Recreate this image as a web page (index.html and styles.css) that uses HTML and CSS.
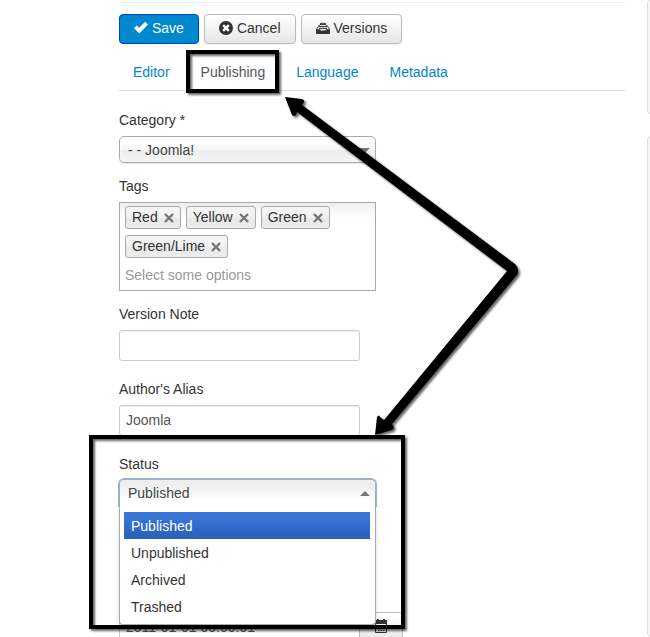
FILE: index.html
```html
<!DOCTYPE html>
<html lang="en">
<head>
    <meta charset="UTF-8">
    <meta name="viewport" content="width=device-width, initial-scale=1.0">
    <title>Edit Article</title>
    <link rel="stylesheet" href="styles.css">
</head>
<body>
    <div class="page">
        <main class="content">
            <form class="edit-form">
                <!-- Toolbar -->
                <div class="toolbar">
                    <button type="button" class="btn btn-primary">
                        <svg class="icon" viewBox="0 0 14 14"><path d="M0 7.2 2.6 4.4 5.2 6.8 11.2.8 14 3.6 5.3 12.6z"/></svg>
                        Save
                    </button>
                    <button type="button" class="btn">
                        <svg class="icon" viewBox="0 0 14 14"><circle cx="7" cy="7" r="7"/><path class="cross" d="M4.2 4.2l5.6 5.6M9.8 4.2l-5.6 5.6"/></svg>
                        Cancel
                    </button>
                    <button type="button" class="btn">
                        <svg class="icon" viewBox="0 0 14 14"><path d="M0 8.2h4l.8 1.4h4.4l.8-1.4h4V12c0 .7-.4 1-1 1H1c-.6 0-1-.3-1-1z"/><path class="line" d="M.5 8 2.4 5.6h9.2L13.5 8M2.6 5.2 4 3.6h6l1.4 1.6M4 3 5 2.3h4l1 .7M3 7.4h8"/></svg>
                        Versions
                    </button>
                </div>

                <!-- Tabs -->
                <nav class="tabs">
                    <a href="#editor">Editor</a>
                    <a href="#publishing" class="active">Publishing</a>
                    <a href="#language">Language</a>
                    <a href="#metadata">Metadata</a>
                </nav>

                <!-- Publishing -->
                <div class="field">
                    <label for="category">Category *</label>
                    <div class="select">
                        <select id="category">
                            <option>- - Joomla!</option>
                        </select>
                    </div>
                </div>

                <div class="field">
                    <label for="tags">Tags</label>
                    <div class="tags">
                        <span class="tag">Red <button type="button" aria-label="Remove Red"><svg viewBox="0 0 10 10"><path d="M1 1l8 8M9 1L1 9"/></svg></button></span>
                        <span class="tag">Yellow <button type="button" aria-label="Remove Yellow"><svg viewBox="0 0 10 10"><path d="M1 1l8 8M9 1L1 9"/></svg></button></span>
                        <span class="tag">Green <button type="button" aria-label="Remove Green"><svg viewBox="0 0 10 10"><path d="M1 1l8 8M9 1L1 9"/></svg></button></span>
                        <span class="tag">Green/Lime <button type="button" aria-label="Remove Green/Lime"><svg viewBox="0 0 10 10"><path d="M1 1l8 8M9 1L1 9"/></svg></button></span>
                        <input type="text" id="tags" placeholder="Select some options">
                    </div>
                </div>

                <div class="field field-text">
                    <label for="version-note">Version Note</label>
                    <input type="text" id="version-note" class="text">
                </div>

                <div class="field field-text">
                    <label for="alias">Author's Alias</label>
                    <input type="text" id="alias" class="text" value="Joomla">
                </div>

                <div class="field field-status">
                    <label for="status">Status</label>
                    <div class="select open">
                        <select id="status">
                            <option>Published</option>
                        </select>
                        <ul class="menu" role="listbox" aria-label="Status">
                            <li class="selected" role="option" aria-selected="true">Published</li>
                            <li role="option">Unpublished</li>
                            <li role="option">Archived</li>
                            <li role="option">Trashed</li>
                        </ul>
                    </div>
                </div>

                <div class="date">
                    <input type="text" class="text" aria-label="Start Publishing" value="2011-01-01 00:00:01">
                    <button type="button" class="btn" aria-label="Calendar">
                        <svg class="icon" viewBox="0 0 14 14"><path d="M1 1h2V0h2v1h4V0h2v1h2v4H1z"/><path class="line" d="M1.5 5v8.5h11V5M4 7.5h1.5m1 0H8m1 0h1.5M4 9.5h1.5m1 0H8m1 0h1.5M4 11.5h1.5m1 0H8m1 0h1.5"/></svg>
                    </button>
                </div>
            </form>
        </main>

        <aside class="sidebar">
            <div class="well"></div>
            <div class="well well-main"></div>
        </aside>
    </div>

    <!-- Callout frames and arrows -->
    <svg class="callouts" width="650" height="637" viewBox="0 0 650 637" aria-hidden="true">
        <rect x="188" y="52" width="89" height="39"/>
        <rect x="91" y="437" width="312" height="190"/>
        <path d="M285 97l17 2q3 1 2 3l-2 3 213 159q5 5 2 11L392 424l2 3q0 2-2 3l-17 5 2-18q2-3 3 0l4 3 123-149L297 112l-1 3q-2 2-4 0z"/>
    </svg>
</body>
</html>
```
FILE: styles.css
```css
* {
    box-sizing: border-box;
}

body {
    margin: 0;
    background: #fff;
    color: #333;
    font-family: Arial, "Liberation Sans", sans-serif;
    font-size: 14px;
    line-height: 18px;
}

input, select, button {
    margin: 0;
    font: inherit;
    color: inherit;
}

.page {
    display: flex;
    gap: 22px;
    height: 100vh;
    padding-left: 119px;
    overflow: hidden;
}

.content {
    flex: 1;
    padding-top: 2px;
}

.edit-form {
    border-top: 1px solid #eee;
    padding-top: 11px;
}

/* Toolbar */
.toolbar {
    display: flex;
    gap: 5px;
    margin-bottom: 10px;
}

.btn {
    display: flex;
    align-items: center;
    gap: 4px;
    height: 30px;
    padding: 0 14px 2px;
    border: 1px solid #bbb;
    border-radius: 4px;
    background: linear-gradient(#fff, #e6e6e6);
    box-shadow: inset 0 1px 0 #fff, 0 1px 2px rgba(0, 0, 0, 0.05);
    cursor: pointer;
}

.btn-primary {
    border-color: #04c;
    background: #08c;
    color: #fff;
    box-shadow: none;
}

.icon {
    width: 14px;
    height: 14px;
    fill: currentColor;
}

.icon .cross {
    stroke: #fff;
    stroke-width: 2.4;
}

.icon .line {
    fill: none;
    stroke: currentColor;
}

/* Tabs */
.tabs {
    display: flex;
    gap: 3px;
    margin-bottom: 20px;
    border-bottom: 1px solid #ddd;
}

.tabs a {
    padding: 9px 14px;
    color: #08c;
    text-decoration: none;
}

.tabs .active {
    color: #555;
}

/* Fields */
.field {
    margin-bottom: 14px;
}

.field-text {
    margin-bottom: 19px;
}

.field-status {
    margin-bottom: 106px;
}

label {
    display: block;
    margin-bottom: 7px;
}

.field-status label {
    margin-bottom: 6px;
}

.text {
    display: block;
    width: 241px;
    height: 31px;
    padding: 0 6px 2px;
    border: 1px solid #ccc;
    border-radius: 3px;
    background: #fff;
    color: #555;
    box-shadow: inset 0 1px 1px rgba(0, 0, 0, 0.08);
}

.select {
    position: relative;
    width: 257px;
}

.select select {
    display: block;
    width: 100%;
    height: 27px;
    padding: 0 8px;
    appearance: none;
    border: 1px solid #aaa;
    border-radius: 5px;
    background: linear-gradient(#fff 20%, #f6f6f6 50%, #eee 52%, #f4f4f4);
    box-shadow: inset 0 0 3px #fff, 0 1px 1px rgba(0, 0, 0, 0.1);
    color: #444;
    outline: none;
}

.select::after {
    content: "";
    position: absolute;
    top: 12px;
    right: 6px;
    border: 5px solid transparent;
    border-top-color: #777;
    border-bottom: 0;
}

.select.open select {
    border-bottom-color: #fff;
    border-radius: 5px 5px 0 0;
    background: linear-gradient(#eee 20%, #fff 80%);
    box-shadow: 0 0 0 1px #8fb4f0;
}

.select.open::after {
    border-top: 0;
    border-bottom: 5px solid #777;
}

.menu {
    position: absolute;
    top: 26px;
    left: 0;
    z-index: 1;
    width: 100%;
    margin: 0;
    padding: 7px 5px 4px 4px;
    border: 1px solid #aaa;
    border-top: 0;
    border-radius: 0 0 4px 4px;
    background: #fff;
    box-shadow: 0 4px 5px rgba(0, 0, 0, 0.15);
    list-style: none;
}

.menu li {
    height: 27px;
    padding: 5px 7px;
}

.menu .selected {
    background: linear-gradient(#3875d7 20%, #2a62bc 90%);
    color: #fff;
}

/* Tags */
.tags {
    display: flex;
    flex-wrap: wrap;
    gap: 6px 5px;
    width: 257px;
    padding: 3px 5px;
    border: 1px solid #aaa;
    background: linear-gradient(#eee, #fff 15px);
}

.tag {
    display: flex;
    align-items: center;
    gap: 6px;
    height: 23px;
    padding: 0 6px 2px;
    border: 1px solid #aaa;
    border-radius: 3px;
    background: linear-gradient(#f4f4f4 20%, #f0f0f0 50%, #e8e8e8 52%, #eee);
}

.tag button {
    padding: 3px 0 0;
    border: 0;
    background: none;
    cursor: pointer;
}

.tag svg {
    display: block;
    width: 10px;
    height: 10px;
    stroke: #777;
    stroke-width: 2.4;
}

.tags input {
    flex: 1 0 100%;
    min-width: 0;
    height: 23px;
    padding: 0 0 2px;
    border: 0;
    background: none;
    outline: none;
}

.tags input::placeholder {
    color: #999;
}

/* Date */
.date {
    display: flex;
}

.date .text {
    border-radius: 3px 0 0 3px;
}

.date .btn {
    height: 31px;
    margin-left: -1px;
    padding-bottom: 4px;
    border-radius: 0 3px 3px 0;
}

/* Sidebar */
.sidebar {
    flex: 0 0 3px;
    display: flex;
    flex-direction: column;
    gap: 22px;
    overflow: hidden;
}

.well {
    flex: 0 0 114px;
    width: 200px;
    border: 1px solid #ddd;
    border-top: 0;
    border-radius: 4px;
    background: #f5f5f5;
}

.well-main {
    flex: 1;
    border-top: 1px solid #ddd;
}

/* Callouts */
.callouts {
    position: absolute;
    top: 0;
    left: 0;
    z-index: 2;
    pointer-events: none;
    filter: drop-shadow(2px 2px 1px rgba(0, 0, 0, 0.6));
}

.callouts rect {
    fill: none;
    stroke: #000;
    stroke-width: 4;
}
```
